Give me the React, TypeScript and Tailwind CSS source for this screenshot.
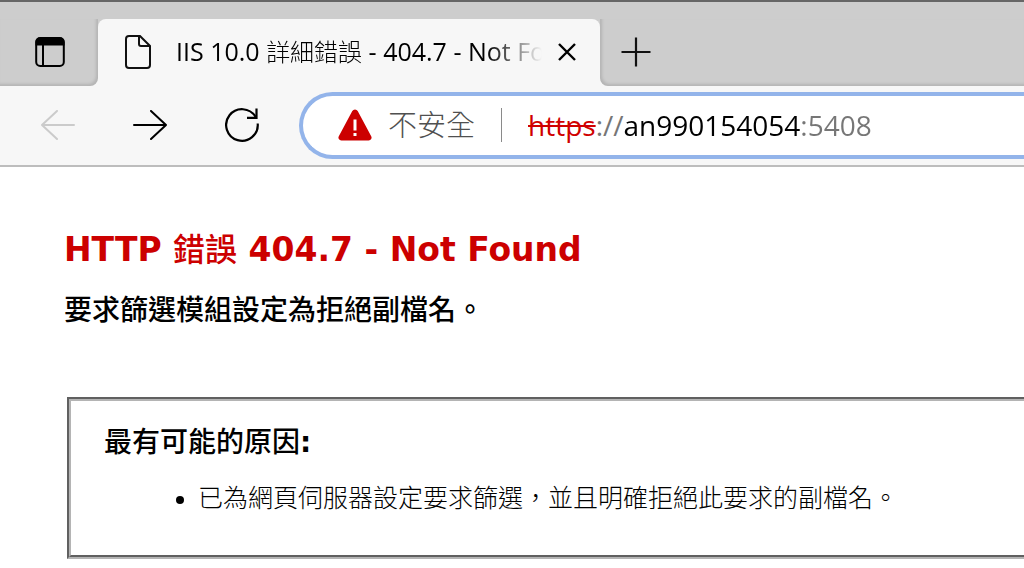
import { useState } from "react";

const reasons = ["已為網頁伺服器設定要求篩選，並且明確拒絕此要求的副檔名。"];

const TabActionsIcon = () => (
  <svg viewBox="0 0 30 30" className="size-[30px]" fill="none" stroke="#000" strokeWidth="2">
    <rect x="1.2" y="1" width="27.6" height="28" rx="4" />
    <path d="M.5 8.500V5a4.500 4.500 0 0 1 4.500-4.500h20a4.500 4.500 0 0 1 4.500 4.500v3.500z" fill="#000" stroke="none" />
    <path d="M8 8v21" />
  </svg>
);

const PageIcon = () => (
  <svg viewBox="0 0 28 34" className="h-[34px] w-7" fill="none" stroke="#111" strokeWidth="2">
    <path d="M5 1h11l10 10V30a3 3 0 0 1-3 3H5a3 3 0 0 1-3-3V4a3 3 0 0 1 3-3z" />
    <path d="M15 1v8a2 2 0 0 0 2 2h9" />
  </svg>
);

const CloseIcon = () => (
  <svg viewBox="0 0 18 18" className="size-[18px]" stroke="#000" strokeWidth="2.400">
    <path d="M1 1l16 16M17 1L1 17" />
  </svg>
);

const PlusIcon = () => (
  <svg viewBox="0 0 30 30" className="size-[30px]" stroke="#111" strokeWidth="2.200">
    <path d="M15 .5v29M.5 15h29" />
  </svg>
);

const ArrowIcon = ({ className }: { className: string }) => (
  <svg
    viewBox="0 0 34 30"
    className={`h-[30px] w-[34px] ${className}`}
    fill="none"
    stroke="currentColor"
    strokeWidth="2"
    strokeLinecap="round"
    strokeLinejoin="round"
  >
    <path d="M1 15h32M18 1l15 14-15 14" />
  </svg>
);

const ReloadIcon = () => (
  <svg viewBox="0 0 34 34" className="size-[34px]" fill="none" stroke="#000" strokeWidth="2.200">
    <path d="M32.700 15.500A15.800 15.800 0 1 1 30.600 9" />
    <path d="M31.500 .5v9.300h-9.500" />
  </svg>
);

const WarningIcon = () => (
  <svg viewBox="0 0 34 32" className="h-8 w-[34px] shrink-0">
    <path
      d="M14.300 2a3.100 3.100 0 0 1 5.400 0l13.500 25.200A2.900 2.900 0 0 1 30.700 31.500H3.300A2.900 2.900 0 0 1 .8 27.200z"
      fill="#cc0000"
    />
    <path d="M17 10.500v11M17 24v3" stroke="#fff" strokeWidth="3" />
  </svg>
);

const TabStrip = () => (
  <div className="border-t-2 border-[#666] bg-[#cdcdcd] pt-[17px]">
    <div className="flex h-[67px] bg-[#f7f7f7]">
      <div className="flex w-[98px] shrink-0 items-center justify-center rounded-br-lg bg-[#cdcdcd] pb-0.5 pl-0.5 shadow-[inset_-2px_-2px_3px_rgba(0,0,0,0.12)]">
        <button title="分頁動作">
          <TabActionsIcon />
        </button>
      </div>
      <div className="w-[502px] shrink-0 bg-[#cdcdcd]" role="tablist">
        <div
          role="tab"
          aria-selected="true"
          className="flex h-full items-center rounded-t-lg bg-[#f7f7f7] pr-6 pb-0.5 pl-[26px]"
        >
          <PageIcon />
          <span className="ml-6 flex-1 overflow-hidden whitespace-nowrap bg-linear-to-r from-black from-85% to-transparent bg-clip-text text-[25px] text-transparent">
            IIS 10.0 <span className="text-2xl font-light">詳細錯誤</span> - 404.7 - Not Found
          </span>
          <button title="關閉分頁" className="ml-4">
            <CloseIcon />
          </button>
        </div>
      </div>
      <div className="flex flex-1 items-center rounded-bl-lg bg-[#cdcdcd] pb-0.5 pl-[21px] shadow-[inset_2px_-2px_3px_rgba(0,0,0,0.12)]">
        <button title="新增分頁">
          <PlusIcon />
        </button>
      </div>
    </div>
  </div>
);

const Toolbar = () => {
  const [host, setHost] = useState("an990154054:5408");

  return (
    <div className="flex h-[81px] items-center border-b-2 border-[#bdbdbd] bg-[#f7f7f7] pl-[41px]">
      <div className="flex shrink-0 items-center gap-[58px] pb-0.5">
        <button title="上一頁" disabled>
          <ArrowIcon className="rotate-180 text-[#cbcbcb]" />
        </button>
        <button title="下一頁">
          <ArrowIcon className="text-black" />
        </button>
        <button title="重新整理">
          <ReloadIcon />
        </button>
      </div>
      <div className="ml-10 flex h-[67px] min-w-0 flex-1 items-center rounded-l-full border-4 border-r-0 border-[#93b4ea] bg-white pb-0.5 pl-[35px] text-[28px]">
        <WarningIcon />
        <span className="ml-4 shrink-0 text-[29px] font-light text-[#505050]">不安全</span>
        <span className="mx-[26px] h-[34px] w-px shrink-0 bg-[#8a8a8a]" />
        <label htmlFor="address" className="shrink-0 text-[#767676]">
          <span className="text-[#d00000] line-through decoration-2">https</span>://
        </label>
        <input
          id="address"
          type="text"
          value={host}
          onChange={(e) => setHost(e.target.value)}
          className="min-w-0 flex-1 bg-linear-to-r from-black from-[176px] to-[#767676] to-[176px] bg-clip-text text-transparent caret-black outline-none"
        />
      </div>
    </div>
  );
};

const ErrorPage = () => (
  <main className="pt-[63px] pl-16 font-['DejaVu_Sans','Noto_Sans_CJK_TC',sans-serif] text-black">
    <h1 className="text-[33px] leading-10 font-bold text-[#cc0000]">
      HTTP <span className="text-[32px] font-medium">錯誤</span> 404.7 - Not Found
    </h1>
    <h2 className="mt-[21px] text-[28px] leading-10 font-medium">
      要求篩選模組設定為拒絕副檔名。
    </h2>
    <section className="mt-[66px] ml-[3px] h-[162px] border-4 border-r-0 border-[#b4b4b4] pt-[22px] pl-[33px] [border-style:groove]">
      <h3 className="text-[28px] leading-10 font-medium">
        最有可能的原因<b>:</b>
      </h3>
      <ul className="mt-4 list-disc pl-[94px] text-[25px] leading-10 font-light">
        {reasons.map((reason) => (
          <li key={reason}>{reason}</li>
        ))}
      </ul>
    </section>
  </main>
);

const App = () => (
  <div
    lang="zh-Hant"
    className="min-h-screen overflow-hidden bg-white font-['Open_Sans','Noto_Sans_CJK_TC',sans-serif]"
  >
    <header>
      <TabStrip />
      <Toolbar />
    </header>
    <ErrorPage />
  </div>
);

export default App;
